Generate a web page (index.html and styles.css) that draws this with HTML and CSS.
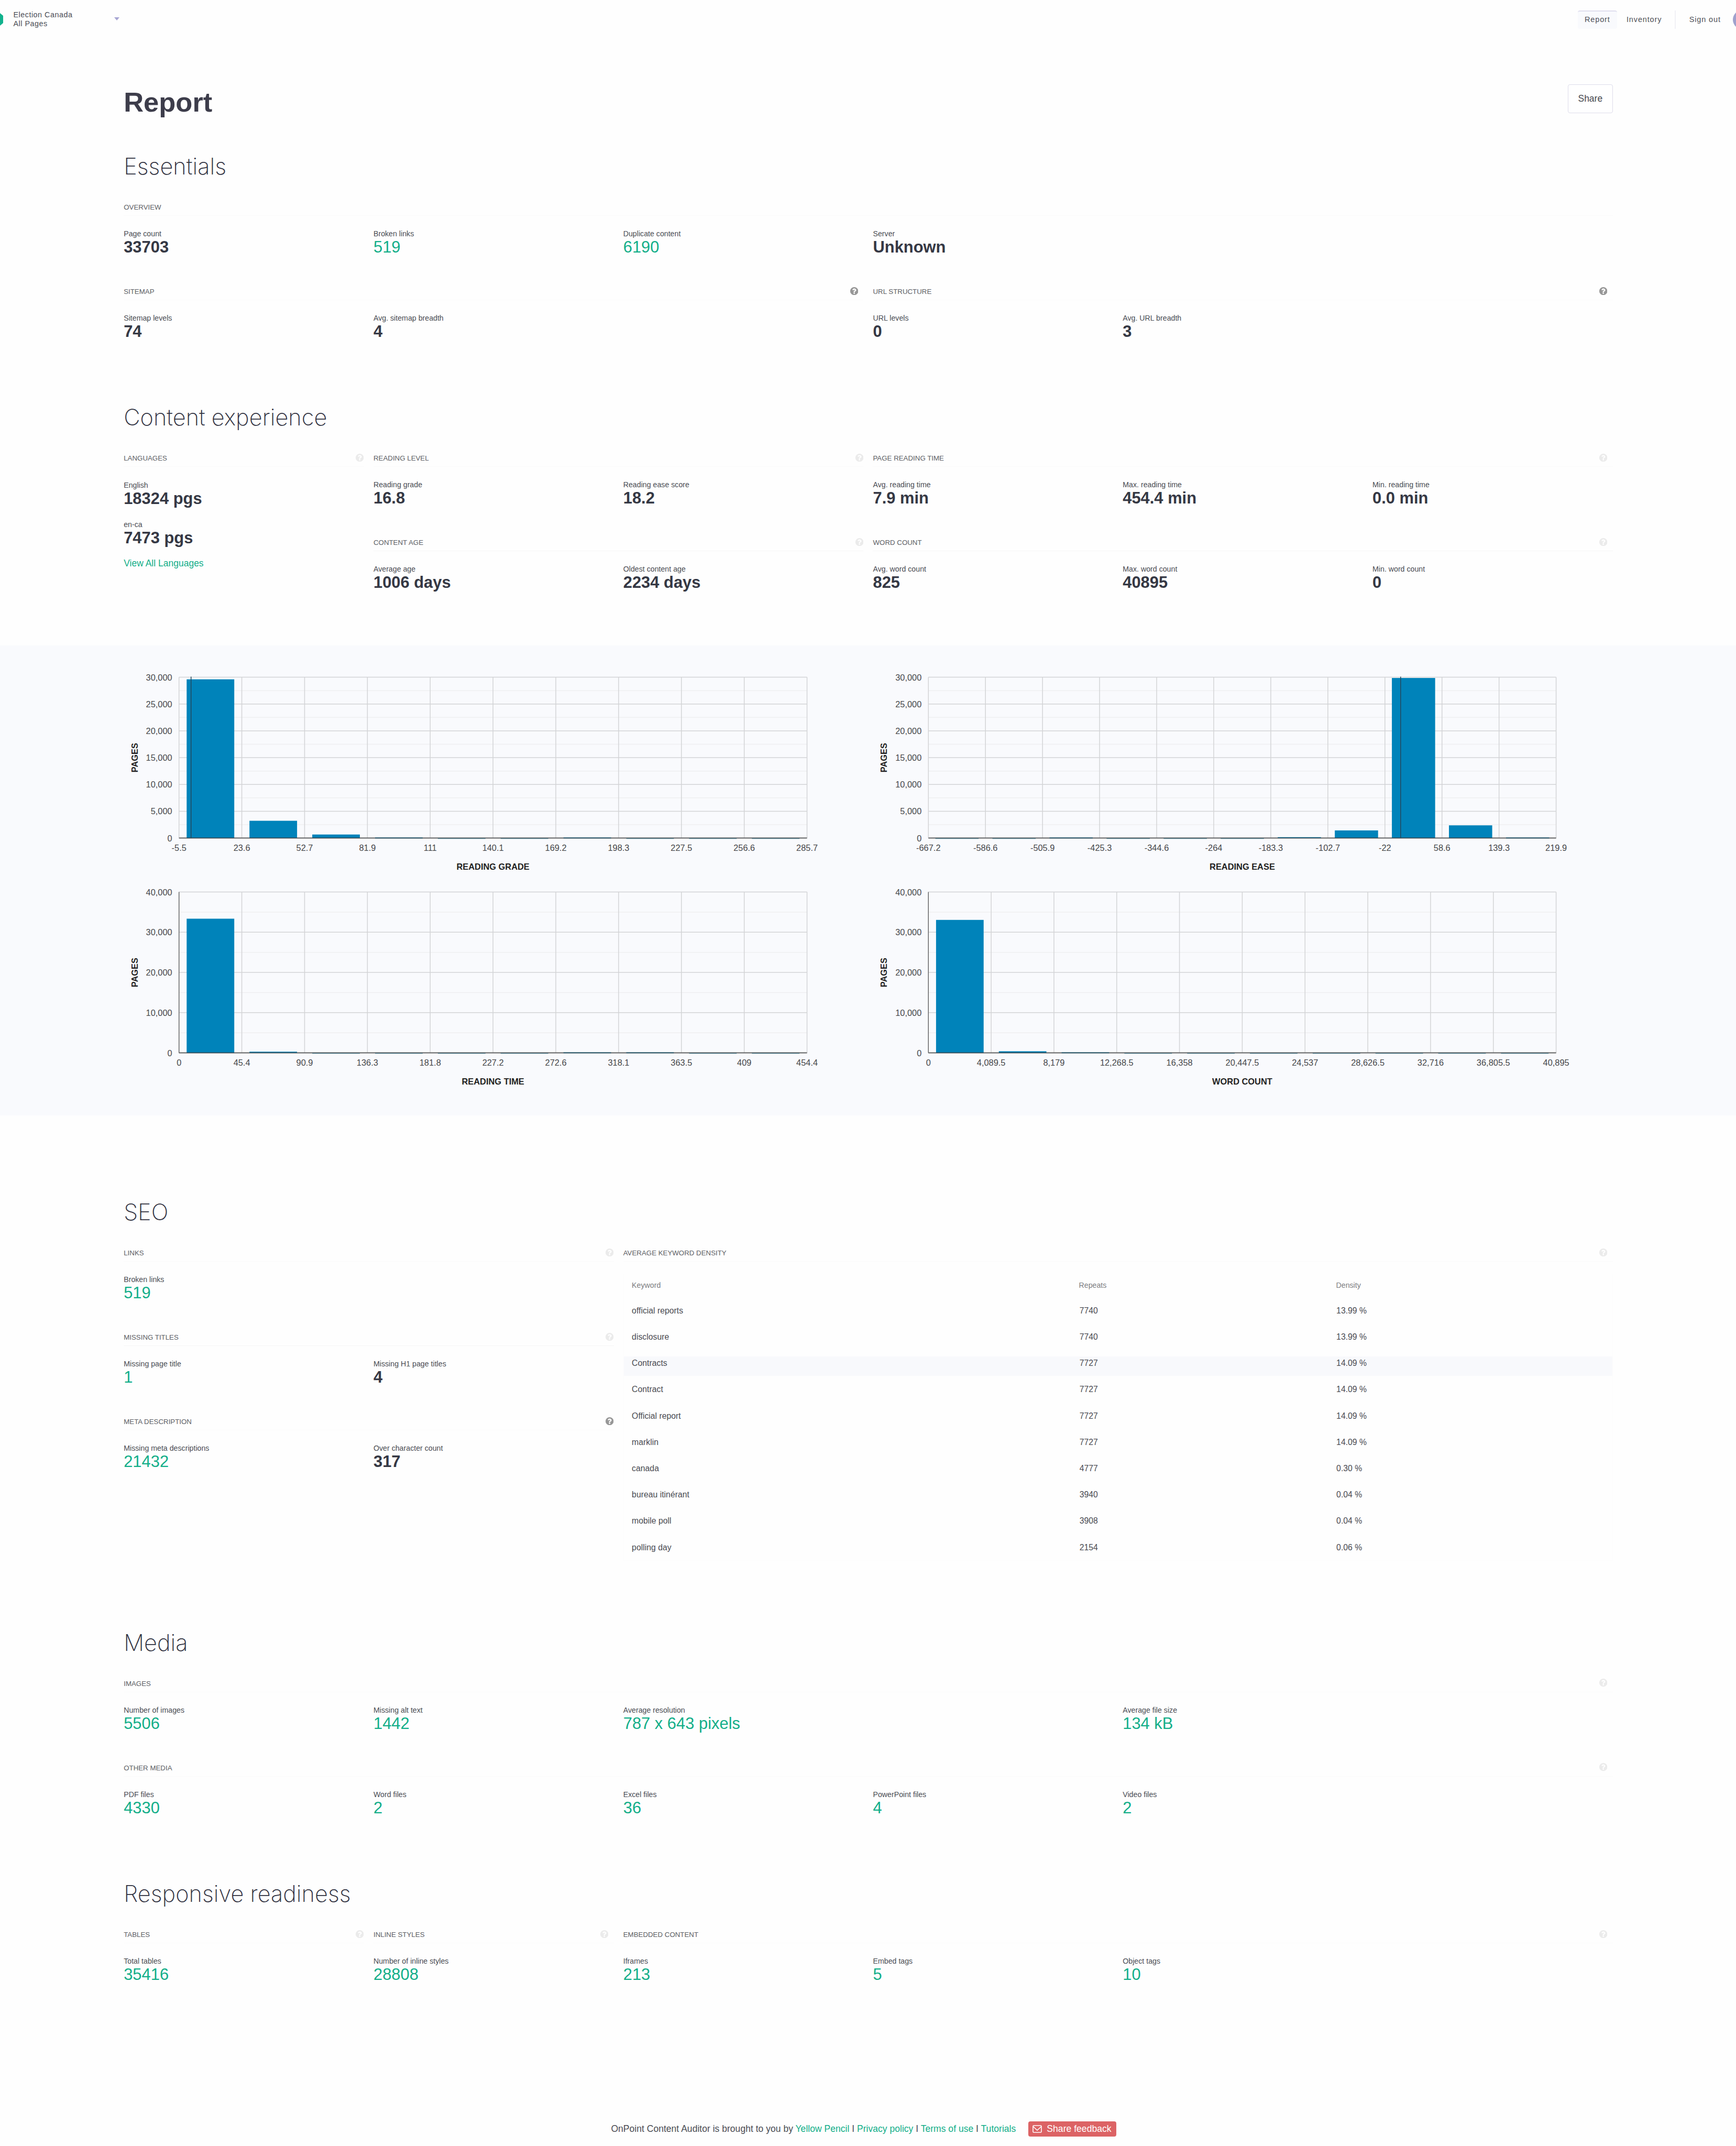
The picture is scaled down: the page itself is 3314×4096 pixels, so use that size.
FILE: index.html
```html
<!DOCTYPE html>
<html lang="en">
<head>
<meta charset="utf-8">
<title>Report</title>
<link rel="stylesheet" href="styles.css">
</head>
<body>
<svg class="sprite" aria-hidden="true">
  <symbol id="help" viewBox="0 0 1536 1536"><path d="M896 1248v-192q0-14-9-23t-23-9h-192q-14 0-23 9t-9 23v192q0 14 9 23t23 9h192q14 0 23-9t9-23zm256-672q0-88-55.500-163t-138.500-116-170-41q-243 0-371 213-15 24 8 42l132 100q7 6 19 6 16 0 25-12 53-68 86-92 34-24 86-24 48 0 85.500 26t37.500 59q0 38-20 61t-68 45q-63 28-115.500 86.500t-52.500 125.500v36q0 14 9 23t23 9h192q14 0 23-9t9-23q0-19 21.500-49.500t54.500-49.500q32-18 49-28.500t46-35 44.500-48 28-60.500 12.500-81zm384 192q0 209-103 385.500t-279.500 279.500-385.500 103-385.500-103-279.500-279.500-103-385.500 103-385.500 279.500-279.500 385.500-103 385.500 103 279.500 279.500 103 385.500z"/></symbol>
</svg>

<header class="topbar">
  <svg class="logo" viewBox="0 0 6 24"><path d="M0 0L6 5V19L0 24Z"/></svg>
  <div class="project">
    <div class="project-name">Election Canada<br>All Pages</div>
    <span class="caret"></span>
  </div>
  <nav class="nav">
    <a class="tab active">Report</a>
    <a class="tab">Inventory</a>
    <span class="divider"></span>
    <a class="signout">Sign out</a>
    <span class="avatar"></span>
  </nav>
</header>

<div class="wrap title-row">
  <h1>Report</h1>
  <button class="share">Share</button>
</div>

<section class="wrap section">
  <h2>Essentials</h2>
  <div class="grid">
    <div class="group span6">
      <div class="head">OVERVIEW</div>
      <div class="metrics c6">
        <div class="metric"><span>Page count</span><b>33703</b></div>
        <div class="metric"><span>Broken links</span><a>519</a></div>
        <div class="metric"><span>Duplicate content</span><a>6190</a></div>
        <div class="metric"><span>Server</span><b>Unknown</b></div>
      </div>
    </div>
    <div class="group span3 inset">
      <div class="head">SITEMAP<svg class="help dark"><use href="#help"/></svg></div>
      <div class="metrics c3">
        <div class="metric"><span>Sitemap levels</span><b>74</b></div>
        <div class="metric"><span>Avg. sitemap breadth</span><b>4</b></div>
      </div>
    </div>
    <div class="group span3 inset">
      <div class="head">URL STRUCTURE<svg class="help dark"><use href="#help"/></svg></div>
      <div class="metrics c3">
        <div class="metric"><span>URL levels</span><b>0</b></div>
        <div class="metric"><span>Avg. URL breadth</span><b>3</b></div>
      </div>
    </div>
  </div>
</section>

<section class="wrap section content">
  <h2>Content experience</h2>
  <div class="grid">
    <div class="group span1 tall">
      <div class="head">LANGUAGES<svg class="help"><use href="#help"/></svg></div>
      <div class="metrics stack">
        <div class="metric"><span>English</span><b>18324 pgs</b></div>
        <div class="metric"><span>en-ca</span><b>7473 pgs</b></div>
      </div>
      <a class="more">View All Languages</a>
    </div>
    <div class="group span2">
      <div class="head">READING LEVEL<svg class="help"><use href="#help"/></svg></div>
      <div class="metrics c2">
        <div class="metric"><span>Reading grade</span><b>16.8</b></div>
        <div class="metric"><span>Reading ease score</span><b>18.2</b></div>
      </div>
    </div>
    <div class="group span3 inset">
      <div class="head">PAGE READING TIME<svg class="help"><use href="#help"/></svg></div>
      <div class="metrics c3">
        <div class="metric"><span>Avg. reading time</span><b>7.9 min</b></div>
        <div class="metric"><span>Max. reading time</span><b>454.4 min</b></div>
        <div class="metric"><span>Min. reading time</span><b>0.0 min</b></div>
      </div>
    </div>
    <div class="group span2">
      <div class="head ruled">CONTENT AGE<svg class="help"><use href="#help"/></svg></div>
      <div class="metrics c2">
        <div class="metric"><span>Average age</span><b>1006 days</b></div>
        <div class="metric"><span>Oldest content age</span><b>2234 days</b></div>
      </div>
    </div>
    <div class="group span3 inset">
      <div class="head ruled">WORD COUNT<svg class="help"><use href="#help"/></svg></div>
      <div class="metrics c3">
        <div class="metric"><span>Avg. word count</span><b>825</b></div>
        <div class="metric"><span>Max. word count</span><b>40895</b></div>
        <div class="metric"><span>Min. word count</span><b>0</b></div>
      </div>
    </div>
  </div>
</section>

<div class="charts">
  <svg class="chart" id="grade"></svg>
  <svg class="chart" id="ease"></svg>
  <svg class="chart" id="time"></svg>
  <svg class="chart" id="words"></svg>
</div>

<section class="wrap section seo">
  <h2>SEO</h2>
  <div class="grid">
    <div class="seo-groups">
      <div class="group">
        <div class="head">LINKS<svg class="help"><use href="#help"/></svg></div>
        <div class="metrics c2">
          <div class="metric"><span>Broken links</span><a>519</a></div>
        </div>
      </div>
      <div class="group">
        <div class="head ruled">MISSING TITLES<svg class="help"><use href="#help"/></svg></div>
        <div class="metrics c2">
          <div class="metric"><span>Missing page title</span><a>1</a></div>
          <div class="metric"><span>Missing H1 page titles</span><b>4</b></div>
        </div>
      </div>
      <div class="group">
        <div class="head">META DESCRIPTION<svg class="help dark"><use href="#help"/></svg></div>
        <div class="metrics c2">
          <div class="metric"><span>Missing meta descriptions</span><a>21432</a></div>
          <div class="metric"><span>Over character count</span><b>317</b></div>
        </div>
      </div>
    </div>
    <div class="group span4 inset">
      <div class="head">AVERAGE KEYWORD DENSITY<svg class="help"><use href="#help"/></svg></div>
      <div class="table">
        <div class="row thead"><span>Keyword</span><span>Repeats</span><span>Density</span></div>
        <div class="row"><span>official reports</span><span>7740</span><span>13.99 %</span></div>
        <div class="row"><span>disclosure</span><span>7740</span><span>13.99 %</span></div>
        <div class="row hover"><span>Contracts</span><span>7727</span><span>14.09 %</span></div>
        <div class="row"><span>Contract</span><span>7727</span><span>14.09 %</span></div>
        <div class="row"><span>Official report</span><span>7727</span><span>14.09 %</span></div>
        <div class="row"><span>marklin</span><span>7727</span><span>14.09 %</span></div>
        <div class="row"><span>canada</span><span>4777</span><span>0.30 %</span></div>
        <div class="row"><span>bureau itinérant</span><span>3940</span><span>0.04 %</span></div>
        <div class="row"><span>mobile poll</span><span>3908</span><span>0.04 %</span></div>
        <div class="row"><span>polling day</span><span>2154</span><span>0.06 %</span></div>
      </div>
    </div>
  </div>
</section>

<section class="wrap section">
  <h2>Media</h2>
  <div class="grid">
    <div class="group span6 inset">
      <div class="head">IMAGES<svg class="help"><use href="#help"/></svg></div>
      <div class="metrics c6">
        <div class="metric"><span>Number of images</span><a>5506</a></div>
        <div class="metric"><span>Missing alt text</span><a>1442</a></div>
        <div class="metric wide"><span>Average resolution</span><a>787 x 643 pixels</a></div>
        <div class="metric"><span>Average file size</span><a>134 kB</a></div>
      </div>
    </div>
    <div class="group span6 inset">
      <div class="head">OTHER MEDIA<svg class="help"><use href="#help"/></svg></div>
      <div class="metrics c6">
        <div class="metric"><span>PDF files</span><a>4330</a></div>
        <div class="metric"><span>Word files</span><a>2</a></div>
        <div class="metric"><span>Excel files</span><a>36</a></div>
        <div class="metric"><span>PowerPoint files</span><a>4</a></div>
        <div class="metric"><span>Video files</span><a>2</a></div>
      </div>
    </div>
  </div>
</section>

<section class="wrap section last">
  <h2>Responsive readiness</h2>
  <div class="grid">
    <div class="group span1">
      <div class="head">TABLES<svg class="help"><use href="#help"/></svg></div>
      <div class="metrics"><div class="metric"><span>Total tables</span><a>35416</a></div></div>
    </div>
    <div class="group span1 inset">
      <div class="head">INLINE STYLES<svg class="help"><use href="#help"/></svg></div>
      <div class="metrics"><div class="metric"><span>Number of inline styles</span><a>28808</a></div></div>
    </div>
    <div class="group span4 inset">
      <div class="head">EMBEDDED CONTENT<svg class="help"><use href="#help"/></svg></div>
      <div class="metrics c4">
        <div class="metric"><span>Iframes</span><a>213</a></div>
        <div class="metric"><span>Embed tags</span><a>5</a></div>
        <div class="metric"><span>Object tags</span><a>10</a></div>
      </div>
    </div>
  </div>
</section>

<footer class="footer">
  <p>OnPoint Content Auditor is brought to you by <a>Yellow Pencil</a> I <a>Privacy policy</a> I <a>Terms of use</a> I <a>Tutorials</a></p>
  <button class="feedback">
    <svg class="mail" viewBox="0 0 18 15"><rect x="1" y="1" width="16" height="13" rx="1.500"/><path d="M1.500 3L9 10L16.500 3"/></svg>Share feedback
  </button>
</footer>
<script src="charts.js"></script>
</body>
</html>
```
FILE: charts.js
```js
const NS = 'http://www.w3.org/2000/svg';
const TOP = 60.6, H = 307;

function add(svg, tag, attrs, text) {
  const el = document.createElementNS(NS, tag);
  for (const k in attrs) el.setAttribute(k, attrs[k]);
  if (text !== undefined) el.textContent = text;
  svg.appendChild(el);
}

function histogram(id, { left, width, max, step, labels, values, title, zero, mark }) {
  const svg = document.getElementById(id);
  const bottom = TOP + H;
  const n = values.length;
  const slot = width / n;
  for (let v = step / 2; v < max; v += step) {
    const y = bottom - v / max * H;
    add(svg, 'line', { class: 'minor', x1: left, x2: left + width, y1: y, y2: y });
  }
  for (let v = 0; v <= max; v += step) {
    const y = bottom - v / max * H;
    add(svg, 'line', { class: 'major', x1: left, x2: left + width, y1: y, y2: y });
    add(svg, 'text', { class: 'tick end', x: left - 13, y: y + 6 }, v.toLocaleString('en-US'));
  }
  labels.forEach((label, i) => {
    const x = left + i * slot;
    add(svg, 'line', { class: 'major', x1: x, x2: x, y1: TOP, y2: bottom });
    add(svg, 'text', { class: 'tick mid', x, y: bottom + 24.6 }, label);
  });
  values.forEach((v, i) => {
    const h = v / max * H;
    add(svg, 'rect', {
      class: v ? 'bar' : 'bar empty', x: left + i * slot + slot * 0.122, width: slot * 0.758,
      y: bottom - h, height: Math.max(h, 1.6)
    });
  });
  add(svg, 'line', { class: 'axis', x1: left, x2: left + width, y1: bottom, y2: bottom });
  if (zero) add(svg, 'line', { class: 'axis thin', x1: left, x2: left, y1: TOP, y2: bottom });
  if (mark) add(svg, 'line', { class: 'mark', x1: left + mark, x2: left + mark, y1: TOP - 1, y2: bottom });
  add(svg, 'text', { class: 'axis-title', x: left + width / 2, y: bottom + 60 }, title);
  add(svg, 'text', { class: 'axis-title', transform: `translate(${left - 79} ${TOP + H / 2}) rotate(-90)` }, 'PAGES');
}

histogram('grade', {
  left: 106.7, width: 1198.9, max: 30000, step: 5000, title: 'READING GRADE', mark: 23,
  labels: ['-5.5', '23.6', '52.7', '81.9', '111', '140.1', '169.2', '198.3', '227.5', '256.6', '285.7'],
  values: [29609, 3225, 665, 100, 0, 0, 100, 0, 0, 0]
});
histogram('ease', {
  left: 106.3, width: 1198.3, max: 30000, step: 5000, title: 'READING EASE', mark: 901.5,
  labels: ['-667.2', '-586.6', '-505.9', '-425.3', '-344.6', '-264', '-183.3', '-102.7', '-22', '58.6', '139.3', '219.9'],
  values: [0, 0, 100, 0, 0, 0, 170, 1427, 29860, 2375, 100]
});
histogram('time', {
  left: 106.7, width: 1198.9, max: 40000, step: 10000, title: 'READING TIME', zero: true,
  labels: ['0', '45.4', '90.9', '136.3', '181.8', '227.2', '272.6', '318.1', '363.5', '409', '454.4'],
  values: [33370, 290, 0, 0, 0, 0, 130, 130, 0, 0]
});
histogram('words', {
  left: 106.3, width: 1198.3, max: 40000, step: 10000, title: 'WORD COUNT', zero: true,
  labels: ['0', '4,089.5', '8,179', '12,268.5', '16,358', '20,447.5', '24,537', '28,626.5', '32,716', '36,805.5', '40,895'],
  values: [33070, 400, 130, 0, 0, 0, 0, 0, 0, 0]
});
```
FILE: styles.css
```css
* { box-sizing: border-box; }

body {
  margin: 0;
  height: 4096px;
  overflow: hidden;
  background: #fefefe;
  color: #4a4c54;
  font-family: "Liberation Sans", Arial, sans-serif;
}

button { font-family: inherit; margin: 0; }
h1, h2, p { margin: 0; }
a { color: #12ae89; }
.sprite { display: none; }

/* Top bar */
.topbar {
  display: flex;
  align-items: center;
  height: 74.6px;
}
.logo { width: 6px; height: 24px; fill: #12b28d; margin-right: 19.4px; }
.project { display: flex; align-items: center; width: 202.8px; }
.project-name {
  flex: 1;
  font-size: 14.4px;
  line-height: 16.9px;
  letter-spacing: .5px;
  white-space: nowrap;
}
.caret {
  border: 5px solid transparent;
  border-top: 6px solid #a7a5d3;
  border-bottom: 0;
  margin-top: -3px;
}
.nav {
  display: flex;
  align-items: center;
  margin-left: auto;
  width: 302px;
  font-size: 14.5px;
  letter-spacing: .85px;
}
.nav a { color: #4e5057; white-space: nowrap; }
.tab { height: 35px; line-height: 31px; padding: 0 12.6px 0 13px; border-top: 2px solid transparent; }
.tab + .tab { margin-left: 5.2px; }
.tab.active { width: 74.8px; background: #f9fafd; border-top-color: #dfdeee; border-radius: 4px; }
.divider { width: 2px; height: 35.5px; background: #f1f1f6; margin-left: 12.3px; }
.signout { margin-left: 25.6px; line-height: 31px; padding-top: 1px; }
.avatar { flex: none; width: 37px; height: 37px; border-radius: 50%; background: #9fa1cd; margin: 0 -31px 0 auto; }

.wrap { margin: 0 235.4px 0 236.2px; }

/* Title */
.title-row { display: flex; justify-content: space-between; padding-top: 86.3px; height: 214.2px; }
h1 { font-size: 52.5px; line-height: 68.8px; color: #3d3d4b; }
.share {
  width: 85.6px;
  height: 54.8px;
  border: 1.5px solid #dddcea;
  border-radius: 4px;
  background: #fff;
  color: #45474f;
  font-size: 17.5px;
  padding: 0;
}

/* Sections */
.section { padding-bottom: 119.1px; }
.section.content { padding-bottom: 103.9px; }
.section.seo { padding: 156.3px 0 127.9px; }
.section.last { padding-bottom: 264.1px; }
h2 {
  font-family: Inter, "Liberation Sans", sans-serif;
  font-weight: 200;
  font-size: 43.3px;
  line-height: 57.4px;
  color: #30313f;
  margin-bottom: 39.6px;
}
.grid { display: grid; grid-template-columns: repeat(6, 1fr); gap: 59px 18.2px; }
.span1 { grid-column: span 1; }
.span2 { grid-column: span 2; }
.span3 { grid-column: span 3; }
.span4 { grid-column: span 4; }
.span6 { grid-column: span 6; }
.tall { grid-row: span 2; height: 0; }

.head {
  display: flex;
  justify-content: space-between;
  height: 26px;
  font-size: 13.3px;
  line-height: 20px;
  color: #5b5d63;
  border-bottom: 1px solid #fbfbfb;
}
.head.ruled { border-bottom-color: #f6f6f6; }
.help { width: 15.4px; height: 15.4px; margin-top: .8px; fill: #ebebeb; }
.help.dark { fill: #979797; }
.inset > .head { padding-right: 10.4px; }

.metrics { display: grid; gap: 24.5px 18.2px; padding-top: 25.4px; }
.c2 { grid-template-columns: repeat(2, 1fr); }
.c3 { grid-template-columns: repeat(3, 1fr); }
.c4 { grid-template-columns: repeat(4, 1fr); }
.c6 { grid-template-columns: repeat(6, 1fr); }
.stack { padding-top: 26.1px; }
.metric.wide { grid-column: span 2; }
.metric span { display: block; font-size: 14.2px; line-height: 18px; color: #4a4c53; }
.metric b, .metric a { display: block; font-size: 30.9px; line-height: 34px; margin-bottom: -1.4px; white-space: nowrap; }
.metric b { color: #353844; }
.more { display: block; margin-top: 20.5px; font-size: 17.5px; line-height: 24px; }

/* Charts */
.charts {
  display: grid;
  grid-template-columns: 1430.7px 1412.5px;
  grid-auto-rows: 410.7px;
  height: 896.8px;
  padding: 0 235.4px;
  background: #f9fafd;
}
.chart { width: 100%; height: 100%; overflow: visible; }
.minor { stroke: #efeff1; stroke-width: 1.5; }
.major { stroke: #d3d4d6; stroke-width: 1.5; }
.bar { fill: #0083ba; }
.bar.empty { fill: #5f9fb6; }
.axis { stroke: #333; stroke-opacity: .7; stroke-width: 2; }
.axis.thin { stroke-width: 1.4; }
.mark { stroke: #24485c; stroke-width: 1.5; }
.tick { font-size: 16.4px; fill: #47484b; }
.end { text-anchor: end; }
.mid { text-anchor: middle; }
.axis-title { font-size: 16.4px; font-weight: bold; fill: #1f1f21; text-anchor: middle; }

/* Keyword table */
.seo-groups { grid-column: span 2; display: flex; flex-direction: column; gap: 59px; }
.table { margin-top: 23px; padding-top: 10.8px; border: 1px solid #fcfcfc; border-top-color: transparent; }
.row {
  display: grid;
  grid-template-columns: 854.6px 490.4px 1fr;
  height: 37.8px;
  padding: 1.6px 0 0 15.4px;
  margin-bottom: 12.4px;
  font-size: 15.8px;
  line-height: 24px;
  color: #4a4b52;
}
.row:last-child { margin-bottom: 0; }
.row.thead {
  grid-template-columns: 853.4px 491px 1fr;
  height: 20px;
  margin-bottom: 25.6px;
  padding-top: 0;
  font-size: 14.2px;
  line-height: 20px;
  color: #7c7d81;
}
.row.hover { background: #f8f9fc; }

/* Footer */
.footer { display: flex; align-items: center; padding-left: 1166.4px; }
.footer p { font-size: 17.57px; line-height: 28.8px; white-space: nowrap; }
.feedback {
  display: flex;
  align-items: center;
  width: 168.4px;
  height: 28.8px;
  margin-left: 23.6px;
  padding: 0 0 0 8px;
  border: 0;
  border-radius: 4px;
  background: #dc6365;
  color: #fff;
  font-size: 17.6px;
  white-space: nowrap;
}
.mail { width: 18px; height: 15px; margin-right: 9.5px; fill: none; stroke: #fff; stroke-width: 1.6; }
```
